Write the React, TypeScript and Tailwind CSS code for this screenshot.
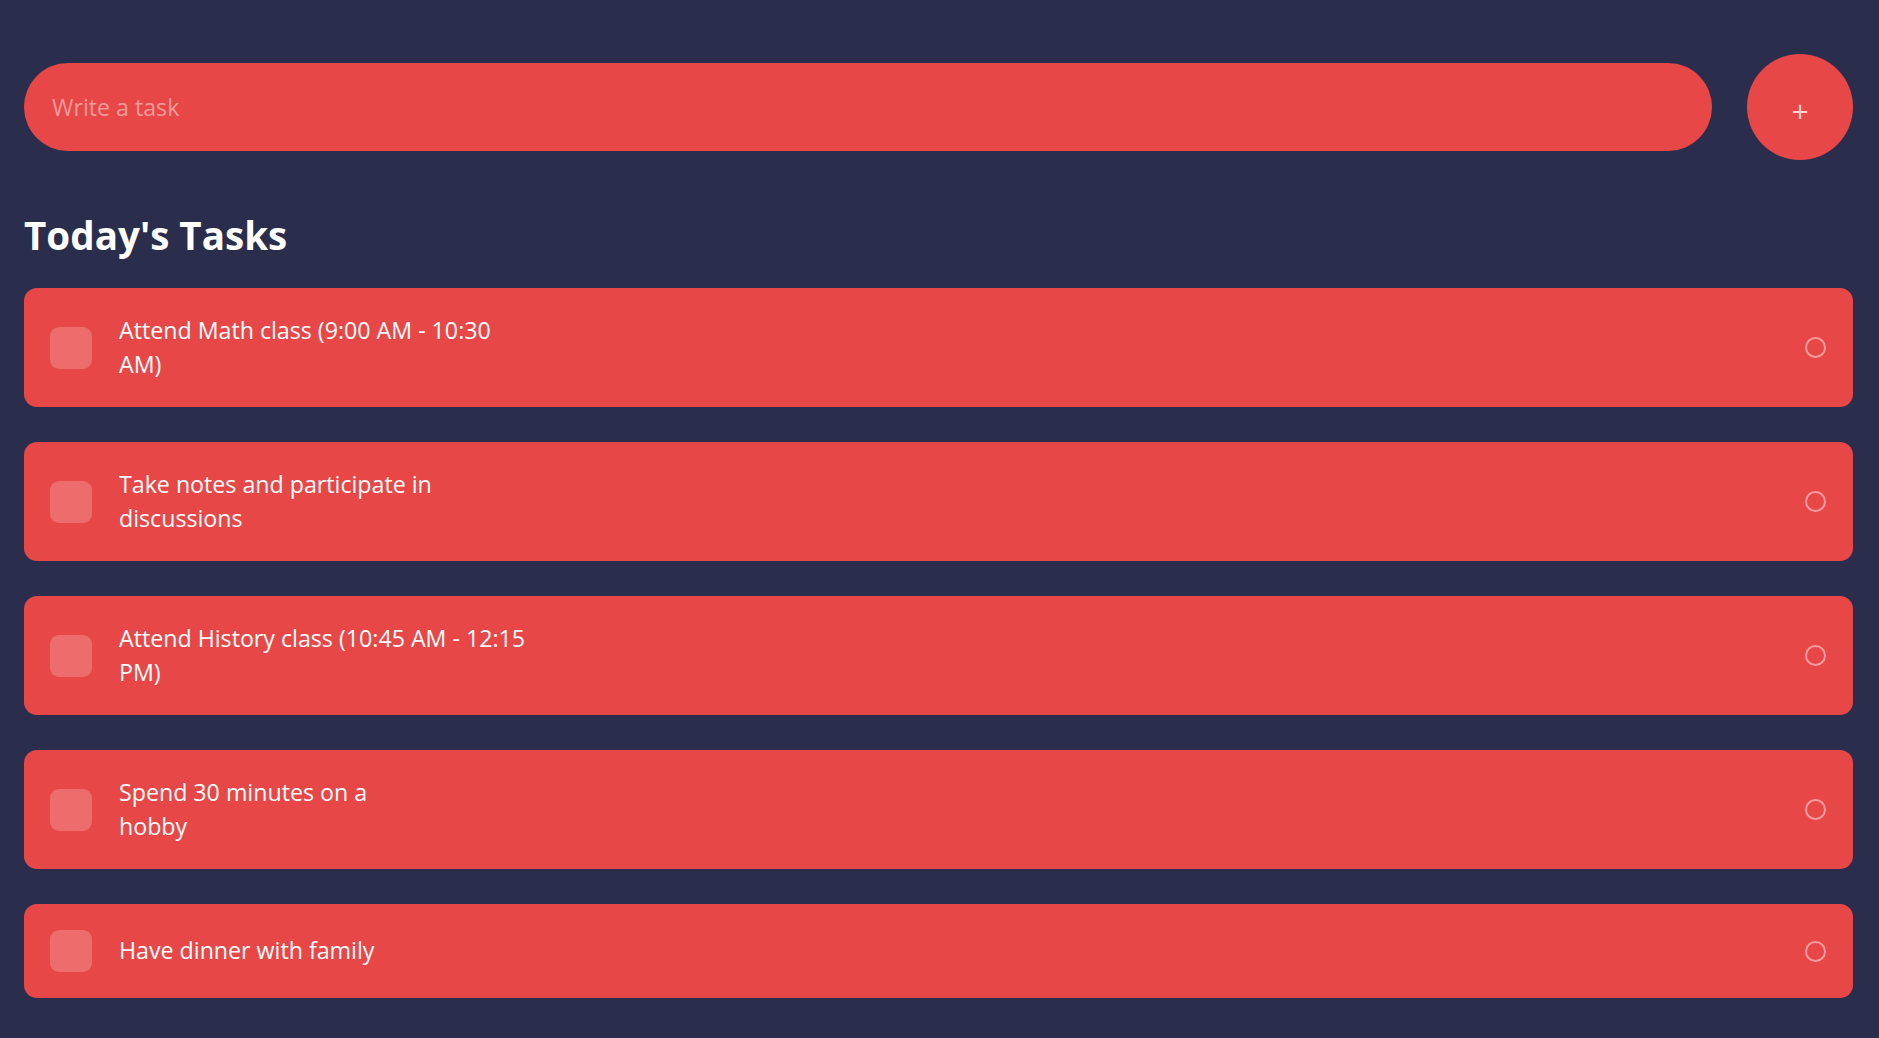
const tasks: string[][] = [
  ["Attend Math class (9:00 AM - 10:30", "AM)"],
  ["Take notes and participate in", "discussions"],
  ["Attend History class (10:45 AM - 12:15", "PM)"],
  ["Spend 30 minutes on a", "hobby"],
  ["Have dinner with family"],
];

function TaskItem({ lines }: { lines: string[] }) {
  return (
    <div className="flex items-center justify-between rounded-[13px] bg-[#e84747] py-[26px] pl-[26px] pr-[27px]">
      <div className="flex items-center">
        <div className="h-[42px] w-[42px] shrink-0 rounded-[9px] bg-[#ed6c6c]" />
        <p className="ml-[27px] text-[23.2px] leading-[33.5px] text-white">
          {lines.map((l, i) => (
            <span key={i} className="block">
              {l}
            </span>
          ))}
        </p>
      </div>
      <div className="h-[21px] w-[21px] rounded-full border-[2.5px] border-[#f39d9d]" />
    </div>
  );
}

export default function App() {
  return (
    <div
      className="min-h-screen bg-[#2a2d4b] pl-6 pr-[26px] pt-[54px] pb-10"
      style={{ fontFamily: "'Open Sans', 'Noto Sans', sans-serif" }}
    >
      {/* Input row */}
      <div className="flex items-center gap-[35px]">
        <input
          type="text"
          placeholder="Write a task"
          className="h-[88px] flex-1 rounded-full bg-[#e84747] pl-[28px] text-[23.2px] text-white outline-none placeholder:text-[#f19a9a]"
        />
        <button className="flex h-[106px] w-[106px] shrink-0 items-center justify-center rounded-full bg-[#e84747] pt-[8px] text-[30px] font-normal leading-none text-[#f8d4d4]">
          +
        </button>
      </div>

      {/* Title */}
      <h1 className="mt-[51px] mb-[29px] text-[38.6px] font-bold leading-[48px] text-white">
        Today's Tasks
      </h1>

      {/* List */}
      <div className="flex flex-col gap-[35px]">
        {tasks.map((t, i) => (
          <TaskItem key={i} lines={t} />
        ))}
      </div>
    </div>
  );
}
